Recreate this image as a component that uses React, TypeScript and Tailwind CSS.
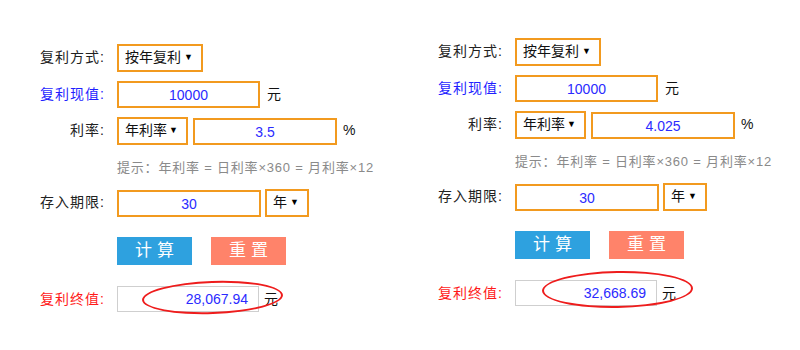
import React from "react";

const FONT = { fontFamily: '"Liberation Sans", "Noto Sans CJK SC", sans-serif' };

type Calc = {
  rate: string;
  result: string;
  offsetTop: string;
  ellipse: string;
};

function Arrow() {
  return <span className="text-[9px] leading-none text-black">▼</span>;
}

function Label({ children, color = "text-[#222]" }: { children: React.ReactNode; color?: string }) {
  return (
    <div className={`w-[67px] shrink-0 text-right text-[14px] tracking-[1px] mr-[12px] ${color}`}>{children}</div>
  );
}

function Field({ value, width }: { value: string; width: string }) {
  return (
    <input
      readOnly
      value={value}
      className={`${width} h-full border-2 border-[#f29a1f] bg-white text-center text-[14px] text-[#2b2bff] outline-none`}
      style={FONT}
    />
  );
}

function Panel({ calc }: { calc: Calc }) {
  return (
    <div className={`w-[398px] shrink-0 flex flex-col ${calc.offsetTop}`}>
      <div className="flex items-center h-[27px]">
        <Label>复利方式:</Label>
        <div className="w-[86px] h-[28px] border-2 border-[#f29a1f] flex items-center justify-between pl-[6px] pr-[8px] text-[14px] text-[#111]">
          <span>按年复利</span>
          <Arrow />
        </div>
      </div>

      <div className="flex items-center h-[27px] mt-[10px]">
        <Label color="text-[#1f1fff]">复利现值:</Label>
        <Field value="10000" width="w-[143px]" />
        <span className="ml-[7px] text-[14px] text-[#111]">元</span>
      </div>

      <div className="flex items-center h-[29px] mt-[8px]">
        <Label>利率:</Label>
        <div className="w-[71px] h-[28px] border-2 border-[#f29a1f] flex items-center justify-between pl-[6px] pr-[8px] text-[14px] text-[#111]">
          <span>年利率</span>
          <Arrow />
        </div>
        <div className="h-[27px] ml-[5px] mt-[2px]">
          <Field value={calc.rate} width="w-[144px]" />
        </div>
        <span className="ml-[6px] text-[14px] text-[#111]">%</span>
      </div>

      <div className="flex items-center h-[20px] mt-[13px] pl-[79px] text-[13px] tracking-[0.8px] text-[#8a8a8a] whitespace-nowrap">
        提示：年利率 = 日利率×360 = 月利率×12
      </div>

      <div className="flex items-center h-[29px] mt-[10px]">
        <Label>存入期限:</Label>
        <div className="h-[27px] mt-[2px]">
          <Field value="30" width="w-[144px]" />
        </div>
        <div className="ml-[4px] w-[44px] h-[28px] border-2 border-[#f29a1f] flex items-center justify-between pl-[6px] pr-[8px] text-[14px] text-[#111]">
          <span>年</span>
          <Arrow />
        </div>
      </div>

      <div className="flex items-center h-[28px] mt-[20px] pl-[79px] gap-[19px]">
        <button className="w-[75px] h-full bg-[#2ea1df] text-white text-[17px] tracking-[5px] pl-[5px]">
          计算
        </button>
        <button className="w-[75px] h-full bg-[#ff836a] text-white text-[17px] tracking-[5px] pl-[5px]">
          重置
        </button>
      </div>

      <div className="flex items-center h-[26px] mt-[21px]">
        <Label color="text-[#ff1a1a]">复利终值:</Label>
        <div className="relative flex items-center">
          <div className="w-[142px] h-[26px] border border-[#cfcfcf] bg-white flex items-center justify-end pr-[10px] text-[14px] text-[#2b2bff]">
            {calc.result}
          </div>
          <span className="ml-[5px] text-[14px] text-[#111]">元</span>
          <div className={`absolute rounded-[50%] border-2 border-[#ee1c1c] ${calc.ellipse}`} />
        </div>
      </div>
    </div>
  );
}

export default function App() {
  const calcs: Calc[] = [
    {
      rate: "3.5",
      result: "28,067.94",
      offsetTop: "pt-[44px]",
      ellipse: "left-[25px] top-[-5px] w-[141px] h-[33px] -rotate-2",
    },
    {
      rate: "4.025",
      result: "32,668.69",
      offsetTop: "pt-[38px]",
      ellipse: "left-[27px] top-[-9px] w-[151px] h-[37px] -rotate-1",
    },
  ];

  return (
    <div className="w-[800px] h-[350px] bg-white flex pl-[38px] overflow-hidden" style={FONT}>
      {calcs.map((c) => (
        <Panel key={c.rate} calc={c} />
      ))}
    </div>
  );
}
